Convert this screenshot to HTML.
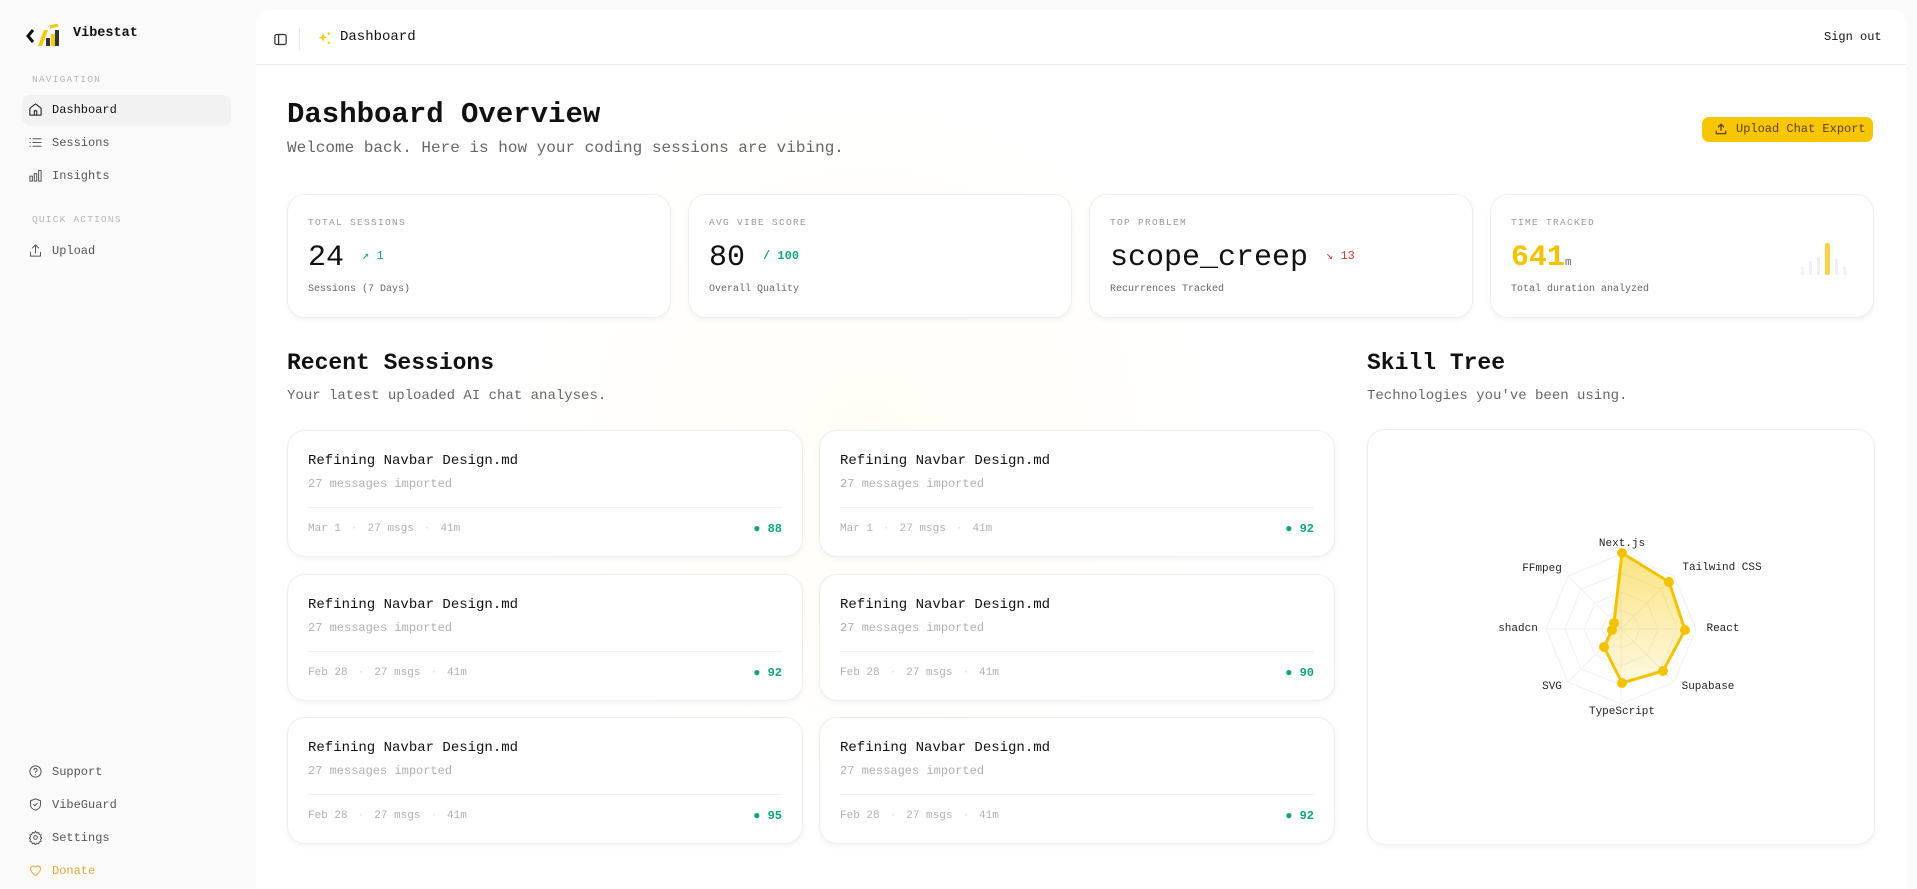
<!DOCTYPE html>
<html><head><meta charset="utf-8"><style>
*{box-sizing:border-box;margin:0;padding:0}
body{width:1917px;height:889px;overflow:hidden;background:#fafafa;font-family:"Liberation Mono",monospace;color:#111;position:relative}
.a{position:absolute;white-space:nowrap}
.nav{position:absolute;left:28px;font-size:12px;color:#555;display:flex;align-items:center;gap:9px}
.nav svg{width:15px;height:15px;fill:none;stroke:#555;stroke-width:1.6;stroke-linecap:round;stroke-linejoin:round}
.sec{position:absolute;left:32px;font-size:9.5px;letter-spacing:1.2px;color:#b5b5b5}
.main{position:absolute;left:256px;top:10px;width:1651px;height:879px;background:#fff;border-radius:14px 14px 0 0;overflow:hidden}
.card{position:absolute;background:#fff;border:1px solid #eeeeea;border-radius:18px;box-shadow:0 2px 6px rgba(0,0,0,.05)}
.lbl{position:absolute;left:20px;top:22px;font-size:9.5px;letter-spacing:1.3px;color:#999}
.num{position:absolute;left:20px;top:46px;font-size:30px;color:#111}
.sub{position:absolute;left:20px;top:89px;font-size:10px;color:#666}
.sc .t{position:absolute;left:20px;top:22px;font-size:14px;color:#111}
.sc .m{position:absolute;left:20px;top:46px;font-size:12px;color:#b0b0b0}
.sc .d{position:absolute;left:20px;right:20px;top:76px;border-top:1px solid #f0f0f0}
.sc .f{position:absolute;left:20px;top:92px;font-size:11px;color:#b0b0b0}
.sc .f span{margin:0 10px;color:#ddd}
.sc .s{position:absolute;right:20px;top:91px;font-size:12px;color:#10a37f;font-weight:bold}
</style></head><body>
<!-- sidebar -->
<svg class="a" style="left:26px;top:24px" width="34" height="24" viewBox="0 0 34 24"><path d="M7 6 L2 12 L7 18" stroke="#111" stroke-width="3" fill="none"/><path d="M12 22 L18 6 L22 6 L16 22Z" fill="#f5c800"/><rect x="20" y="14" width="4" height="8" fill="#333"/><rect x="25" y="10" width="4" height="12" fill="#f5c800"/><rect x="29" y="6" width="4" height="16" fill="#333"/><path d="M24 3 L32 1" stroke="#f5c800" stroke-width="3"/></svg>
<div class="a" style="left:73px;top:26px;font-size:13.5px;font-weight:bold">Vibestat</div>
<div class="sec" style="top:74px">NAVIGATION</div>
<div class="a" style="left:22px;top:95px;width:209px;height:31px;background:#f2f2f2;border-radius:8px"></div>
<div class="nav" style="top:102px;color:#111"><svg viewBox="0 0 24 24" style="stroke:#111"><path d="M3 10 L12 3 L21 10 V21 H3Z M10 21 V14 H14 V21"/></svg>Dashboard</div>
<div class="nav" style="top:135px"><svg viewBox="0 0 24 24"><path d="M8 6H21M8 12H21M8 18H21M3 6h1M3 12h1M3 18h1"/></svg>Sessions</div>
<div class="nav" style="top:168px"><svg viewBox="0 0 24 24"><path d="M3 21V13h4v8ZM10 21V9h4v12ZM17 21V4h4v17Z"/></svg>Insights</div>
<div class="sec" style="top:214px">QUICK ACTIONS</div>
<div class="nav" style="top:243px"><svg viewBox="0 0 24 24"><path d="M12 16V3M7 8l5-5 5 5M4 15v6h16v-6"/></svg>Upload</div>
<div class="nav" style="top:764px"><svg viewBox="0 0 24 24"><circle cx="12" cy="12" r="9"/><path d="M9.5 9.5a2.5 2.5 0 1 1 3.5 2.3c-.7.4-1 1-1 1.7M12 17h0"/></svg>Support</div>
<div class="nav" style="top:797px"><svg viewBox="0 0 24 24"><path d="M12 3l8 3v6c0 5-4 8-8 9-4-1-8-4-8-9V6Z M9 12l2 2 4-4"/></svg>VibeGuard</div>
<div class="nav" style="top:830px"><svg viewBox="0 0 24 24"><circle cx="12" cy="12" r="3"/><path d="M12 2l2 3 3-1 1 3 3 1-1 3 2 2-2 2 1 3-3 1-1 3-3-1-2 3-2-3-3 1-1-3-3-1 1-3-2-2 2-2-1-3 3-1 1-3 3 1Z"/></svg>Settings</div>
<div class="nav" style="top:863px;color:#e8a838"><svg viewBox="0 0 24 24" style="stroke:#e8a838"><path d="M12 20s-8-5-8-11a4.5 4.5 0 0 1 8-2.5A4.5 4.5 0 0 1 20 9c0 6-8 11-8 11Z"/></svg>Donate</div>

<div class="main">
<div class="a" style="left:0;top:0;width:1651px;height:55px;border-bottom:1px solid #ececec;background:#fff"></div>
<div class="a" style="left:260px;top:80px;width:700px;height:700px;border-radius:50%;background:radial-gradient(circle,rgba(255,230,120,.07),rgba(255,255,255,0) 70%)"></div>
<svg class="a" style="left:17px;top:22px" width="15" height="15" viewBox="0 0 24 24" fill="none" stroke="#333" stroke-width="2"><rect x="3" y="4" width="18" height="16" rx="3"/><path d="M9 4v16"/></svg>
<div class="a" style="left:43px;top:18px;height:22px;border-left:1px solid #e5e5e5"></div>
<svg class="a" style="left:60px;top:20px" width="17" height="17" viewBox="0 0 24 24" fill="#f5c800"><path d="M10 4l1.5 5 5 1.5-5 1.5L10 17l-1.5-5L3.5 10.5l5-1.5Z"/><path d="M18 2l.8 2.2L21 5l-2.2.8L18 8l-.8-2.2L15 5l2.2-.8Z"/><circle cx="18" cy="18" r="1.6"/></svg>
<div class="a" style="left:84px;top:19px;font-size:14px">Dashboard</div>
<div class="a" style="left:1568px;top:20px;font-size:12px">Sign out</div>

<div class="a" style="left:31px;top:88px;font-size:29px;font-weight:bold">Dashboard Overview</div>
<div class="a" style="left:31px;top:129px;font-size:16px;color:#666">Welcome back. Here is how your coding sessions are vibing.</div>
<div class="a" style="left:1446px;top:107px;width:171px;height:25px;background:#f7c600;border-radius:7px;font-size:12px;color:#5a4300;padding:5px 0 0 34px">Upload Chat Export</div>
<svg class="a" style="left:1458px;top:112px" width="14" height="14" viewBox="0 0 24 24" fill="none" stroke="#5a4300" stroke-width="2.2"><path d="M12 15V4M7 9l5-5 5 5M4 15v5h16v-5"/></svg>

<div class="card" style="left:31px;top:184px;width:384px;height:124px"><div class="lbl">TOTAL SESSIONS</div><div class="num">24 <span style="font-size:12px;color:#10a37f;vertical-align:6px">↗ 1</span></div><div class="sub">Sessions (7 Days)</div></div>
<div class="card" style="left:432px;top:184px;width:384px;height:124px"><div class="lbl">AVG VIBE SCORE</div><div class="num">80 <span style="font-size:12px;color:#10a37f;font-weight:bold;vertical-align:6px">/ 100</span></div><div class="sub">Overall Quality</div></div>
<div class="card" style="left:833px;top:184px;width:384px;height:124px"><div class="lbl">TOP PROBLEM</div><div class="num">scope_creep <span style="font-size:12px;color:#d33;vertical-align:6px">↘ 13</span></div><div class="sub">Recurrences Tracked</div></div>
<div class="card" style="left:1234px;top:184px;width:384px;height:124px"><div class="lbl">TIME TRACKED</div><div class="num" style="color:#f5c200;font-weight:bold">641<span style="font-size:11px;color:#666;font-weight:normal">m</span></div><div class="sub">Total duration analyzed</div>
<svg class="a" style="left:308px;top:46px" width="60" height="36"><rect x="2" y="26" width="3" height="8" fill="#f3f3f3"/><rect x="10" y="20" width="3" height="14" fill="#f0f0f0"/><rect x="18" y="16" width="3" height="18" fill="#eee"/><rect x="26" y="2" width="5" height="32" rx="2" fill="#f7d24a"/><rect x="36" y="18" width="3" height="16" fill="#f0f0f0"/><rect x="44" y="26" width="3" height="8" fill="#f3f3f3"/></svg></div>

<div class="a" style="left:31px;top:340px;font-size:23px;font-weight:bold">Recent Sessions</div>
<div class="a" style="left:31px;top:378px;font-size:14px;color:#666">Your latest uploaded AI chat analyses.</div>
<div class="a" style="left:1111px;top:340px;font-size:23px;font-weight:bold">Skill Tree</div>
<div class="a" style="left:1111px;top:378px;font-size:14px;color:#666">Technologies you've been using.</div>

<div class="card sc" style="left:31px;top:420px;width:516px;height:127px"><div class="t">Refining Navbar Design.md</div><div class="m">27 messages imported</div><div class="d"></div><div class="f">Mar 1<span>·</span>27 msgs<span>·</span>41m</div><div class="s">● 88</div></div>
<div class="card sc" style="left:563px;top:420px;width:516px;height:127px"><div class="t">Refining Navbar Design.md</div><div class="m">27 messages imported</div><div class="d"></div><div class="f">Mar 1<span>·</span>27 msgs<span>·</span>41m</div><div class="s">● 92</div></div>
<div class="card sc" style="left:31px;top:564px;width:516px;height:127px"><div class="t">Refining Navbar Design.md</div><div class="m">27 messages imported</div><div class="d"></div><div class="f">Feb 28<span>·</span>27 msgs<span>·</span>41m</div><div class="s">● 92</div></div>
<div class="card sc" style="left:563px;top:564px;width:516px;height:127px"><div class="t">Refining Navbar Design.md</div><div class="m">27 messages imported</div><div class="d"></div><div class="f">Feb 28<span>·</span>27 msgs<span>·</span>41m</div><div class="s">● 90</div></div>
<div class="card sc" style="left:31px;top:707px;width:516px;height:127px"><div class="t">Refining Navbar Design.md</div><div class="m">27 messages imported</div><div class="d"></div><div class="f">Feb 28<span>·</span>27 msgs<span>·</span>41m</div><div class="s">● 95</div></div>
<div class="card sc" style="left:563px;top:707px;width:516px;height:127px"><div class="t">Refining Navbar Design.md</div><div class="m">27 messages imported</div><div class="d"></div><div class="f">Feb 28<span>·</span>27 msgs<span>·</span>41m</div><div class="s">● 92</div></div>

<div class="card" style="left:1111px;top:419px;width:508px;height:416px">
<svg class="a" style="left:0;top:0" width="508" height="416" viewBox="1367 429 508 416" font-family="Liberation Mono, monospace" font-size="11" fill="#222">
<defs><linearGradient id="g" x1="0" y1="0" x2="0" y2="1"><stop offset="0" stop-color="#f5c800" stop-opacity=".5"/><stop offset="1" stop-color="#f5c800" stop-opacity=".12"/></linearGradient></defs>
<g fill="none" stroke="#f0f0f0" stroke-width="1">
<polygon points="1620,553 1673,575 1695,628 1673,681 1620,703 1567,681 1545,628 1567,575"/>
<polygon points="1620,572 1660,588 1676,628 1660,668 1620,684 1580,668 1564,628 1580,588"/>
<polygon points="1620,591 1646,602 1657,628 1646,654 1620,665 1594,654 1583,628 1594,602"/>
<polygon points="1620,609 1633,615 1639,628 1633,641 1620,647 1607,641 1601,628 1607,615"/>
<path d="M1620 628L1620 553M1620 628L1673 575M1620 628L1695 628M1620 628L1673 681M1620 628L1620 703M1620 628L1567 681M1620 628L1545 628M1620 628L1567 575"/>
</g>
<polygon points="1621,552 1668,581 1684,629 1662,670 1621,682 1603,646 1611,629 1613,622" fill="url(#g)" stroke="#f5c200" stroke-width="3" stroke-linejoin="round"/>
<g fill="#f5c200"><circle cx="1621" cy="552" r="5"/><circle cx="1668" cy="581" r="5"/><circle cx="1684" cy="629" r="5"/><circle cx="1662" cy="670" r="5"/><circle cx="1621" cy="682" r="5"/><circle cx="1603" cy="646" r="5"/><circle cx="1611" cy="629" r="5"/><circle cx="1613" cy="622" r="5"/></g>
<g text-anchor="middle" dominant-baseline="middle">
<text x="1621" y="542">Next.js</text><text x="1541" y="567">FFmpeg</text><text x="1721" y="566">Tailwind CSS</text>
<text x="1517" y="627">shadcn</text><text x="1722" y="627">React</text><text x="1551" y="685">SVG</text>
<text x="1707" y="685">Supabase</text><text x="1621" y="710">TypeScript</text></g>
</svg></div>
</div>
</body></html>
